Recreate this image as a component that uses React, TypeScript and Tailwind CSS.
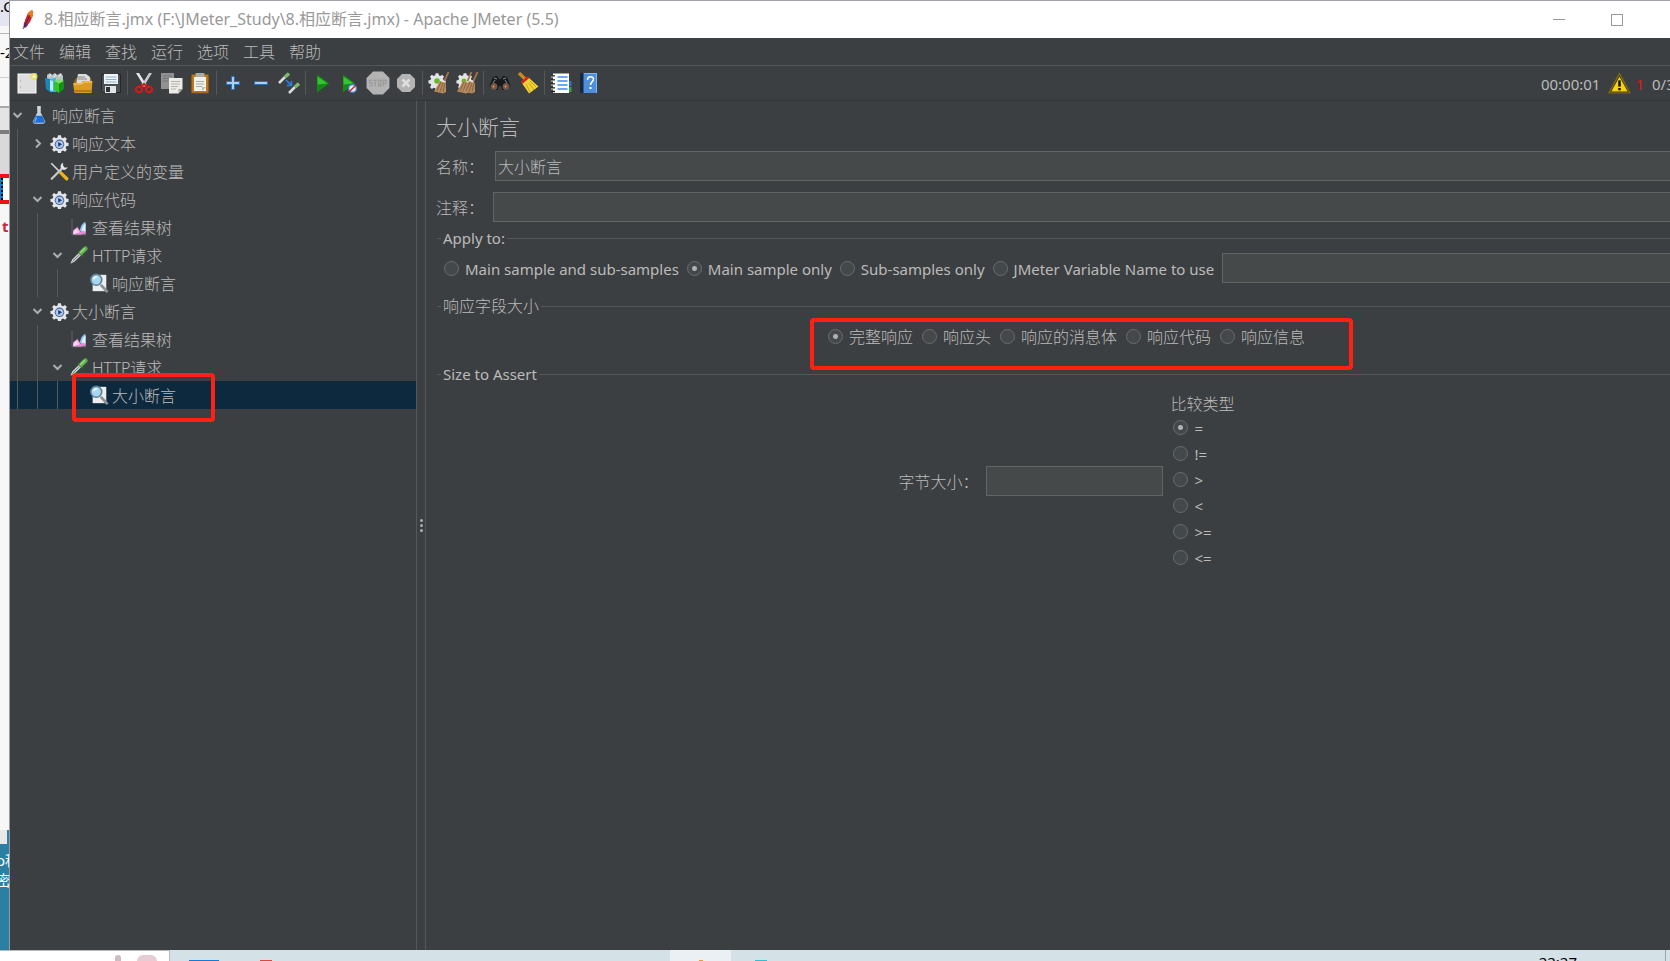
import React from "react";

type Kids = { children?: React.ReactNode };

function Svg({ s = 22, children }: Kids & { s?: number }) {
  return (
    <svg width={s} height={s} viewBox="0 0 22 22" fill="none" aria-hidden="true" className="shrink-0">
      {children}
    </svg>
  );
}

const GearPath = ({ fill = "#e3e5e8" }: { fill?: string }) => (
  <path
    fill={fill}
    d="M9.3 1.5h3.4l.5 2.6 1.9.8 2.2-1.5 2.3 2.3-1.5 2.2.8 1.9 2.6.5v3.4l-2.6.5-.8 1.9 1.5 2.2-2.3 2.3-2.2-1.5-1.9.8-.5 2.6H9.3l-.5-2.6-1.9-.8-2.2 1.5-2.3-2.3 1.5-2.2-.8-1.9L.5 13.700v-3.400l2.600-.5.8-1.900L2.400 5.700l2.300-2.300 2.200 1.500 1.900-.8z"
  />
);

const NewIcon = () => (
  <Svg>
    <rect x="2" y="2" width="18" height="19" fill="#dedede" stroke="#fafafa" />
    <circle cx="4.5" cy="9" r=".6" fill="#999" />
    <circle cx="4.5" cy="15" r=".6" fill="#999" />
    <circle cx="18" cy="4.5" r="3.5" fill="#e9dc5a" opacity=".85" />
    <circle cx="18" cy="4.5" r="1.5" fill="#fffbd0" />
  </Svg>
);
const TemplatesIcon = () => (
  <Svg>
    <path d="M3 3l3-2 2 2 3-2 2 2 4-2 2 3v5H3z" fill="#b9c3c6" />
    <path d="M5 5l2-3M10 5l2-3M15 5l2-3" stroke="#edf2f3" />
    <path d="M1 6l5 1v13l-4-3z" fill="#1b87b8" />
    <path d="M6 7l6-1v14l-6 0z" fill="#3cb7e0" />
    <path d="M6 8l3 1v10l-3-1z" fill="#bfeaf7" />
    <path d="M10 9l5-2 5 2-5 3z" fill="#7fe06a" />
    <path d="M10 9l5 3v9l-5-3z" fill="#35c52b" />
    <path d="M15 12l5-3v8l-5 4z" fill="#159216" />
  </Svg>
);
const OpenIcon = () => (
  <Svg>
    <path d="M2 10l2-4h15l1 4v7H2z" fill="#9a6a10" />
    <path d="M6 2h8l4 3v9H4z" fill="#dcdcdc" />
    <path d="M6 5h7M6 7h9" stroke="#888" />
    <path d="M1 11h8l2-2h9.500l-1 12H2.500z" fill="#d99b25" />
    <path d="M2 12h8l2-2h8" stroke="#f7d27b" />
    <path d="M3 19h16" stroke="#b77b12" strokeWidth="2" />
  </Svg>
);
const SaveIcon = () => (
  <Svg>
    <path d="M1.5 2.5h19v18h-17l-2-2z" fill="#4b4f55" stroke="#25282b" />
    <rect x="4" y="2" width="14" height="10" fill="#eef4f8" />
    <path d="M5.5 5h11M5.5 7.5h11M5.5 10h11" stroke="#8fb3cf" />
    <rect x="5" y="14" width="11" height="7" fill="#e4e4e4" />
    <rect x="6" y="15" width="4" height="5" fill="#303336" />
  </Svg>
);
const CutIcon = () => (
  <Svg>
    <path d="M3 1l3 0 7.500 12-2 2z" fill="#e5e7e8" />
    <path d="M19 1l-3 0-7.500 12 2 2z" fill="#c9cccd" />
    <ellipse cx="6" cy="17.5" rx="3.200" ry="2.800" stroke="#d81818" strokeWidth="2.200" />
    <ellipse cx="16" cy="17.5" rx="3.200" ry="2.800" stroke="#d81818" strokeWidth="2.200" />
    <path d="M8 15l3-3 3 3" stroke="#d81818" strokeWidth="2" />
  </Svg>
);
const CopyIcon = () => (
  <Svg>
    <path d="M0 1h13v16H0z" fill="#8f9192" />
    <path d="M2 4h9M2 6.500h9M2 9h5" stroke="#75787a" />
    <path d="M8 6h13.500v11l-4 4.500H8z" fill="#ecebe6" />
    <path d="M10 9.500h9M10 12h9M10 14.500h7M10 17h5" stroke="#b5b5b0" />
    <path d="M17.500 21.500v-4.500h4z" fill="#a9a9a3" />
  </Svg>
);
const PasteIcon = () => (
  <Svg>
    <rect x="2.500" y="2.500" width="17" height="18.500" rx="1" fill="#b9791b" stroke="#8b5a12" />
    <path d="M5 5h12v14H5z" fill="#f1f1ec" />
    <path d="M7 9.500h8M7 12h8M7 14.500h6" stroke="#aaa" />
    <rect x="6.500" y="1" width="9" height="4" rx="1" fill="#a9aca6" />
    <path d="M13 19v-4h4z" fill="#bbb" />
  </Svg>
);
const PlusIcon = () => (
  <Svg>
    <path d="M11 4v14M4 11h14" stroke="#2f6db5" strokeWidth="4" />
    <path d="M11 5v12M5 11h12" stroke="#a7d0f4" strokeWidth="2" />
  </Svg>
);
const MinusIcon = () => (
  <Svg>
    <path d="M4 11h14" stroke="#2f6db5" strokeWidth="4" />
    <path d="M5 11h12" stroke="#a7d0f4" strokeWidth="2" />
  </Svg>
);
const ToggleIcon = () => (
  <Svg>
    <path d="M1 11l6-6" stroke="#dcdcdc" strokeWidth="2.500" />
    <path d="M7 5l4-3.500" stroke="#7dbb6a" strokeWidth="3.500" />
    <path d="M11 21l6-6" stroke="#dcdcdc" strokeWidth="2.500" />
    <path d="M17 15l4-3.500" stroke="#7dbb6a" strokeWidth="3.500" />
    <path d="M8 8l5 5M13.500 9v4.500H9" stroke="#2f7de0" strokeWidth="1.700" />
  </Svg>
);
const PlayShape = () => (
  <>
    <path d="M6 2.500l12 9L6 20.500z" fill="#138a13" />
    <path d="M6.500 4.500l10 7-10 1z" fill="#35c435" />
  </>
);
const PlayIcon = () => (
  <Svg>
    <PlayShape />
  </Svg>
);
const PlayNoPauseIcon = () => (
  <Svg>
    <g transform="translate(-2)">
      <PlayShape />
    </g>
    <circle cx="13.5" cy="16.500" r="4" fill="#e8eef6" stroke="#3f78c4" strokeWidth="1.500" />
    <path d="M10.500 19.500l6-6" stroke="#d42020" strokeWidth="1.500" />
  </Svg>
);
const StopIcon = () => (
  <Svg s={24}>
    <path d="M6.500.5h9l6 6v9l-6 6h-9l-6-6v-9z" fill="#b3b3b3" />
    <path
      d="M5.600 8.500H3.300v2.500h2.300v2.700H3M6.700 8.500h3.600M8.500 8.500v5.500M11.500 8.500h2v5.200h-2zM15.800 14V8.500h2.400v3h-2.400"
      stroke="#9c9c9c"
      strokeWidth="1.200"
    />
  </Svg>
);
const ShutdownIcon = () => (
  <Svg>
    <path d="M7 2h8l5 5v8l-5 5H7l-5-5V7z" fill="#b3b3b3" />
    <path d="M7.500 7.500l7 7M14.500 7.500l-7 7" stroke="#dedede" strokeWidth="2.500" />
  </Svg>
);
const Brush = ({ x }: { x: number }) => (
  <g transform={`translate(${x})`}>
    <path d="M20.500 0l-4 9" stroke="#a5744a" strokeWidth="1.800" />
    <path d="M12 9l6 2 0 9-3 1.500-9-2z" fill="#b58a5e" />
    <path d="M13 10l-4 9M15 11l-3 9M17 11l-2 9" stroke="#8a6440" />
  </g>
);
const ClearIcon = () => (
  <Svg>
    <g transform="scale(.82)">
      <GearPath />
    </g>
    <circle cx="9" cy="9" r="2.800" fill="#6ab52d" />
    <Brush x={0} />
  </Svg>
);
const ClearAllIcon = () => (
  <Svg>
    <g transform="scale(.82)">
      <GearPath />
    </g>
    <circle cx="8" cy="9" r="2.500" fill="#6ab52d" />
    <Brush x={-5} />
    <Brush x={1} />
  </Svg>
);
const BinocularsIcon = () => (
  <Svg>
    <path d="M4 5l4-1 2 3h2l2-3 4 1 3.500 9-3 4h-5l-1.500-4h-2L8.500 18h-5l-3-4z" fill="#17191a" />
    <path d="M5 6l3 1M17 6l-3 1M6 8l-2 3M16 8l2 3" stroke="#8b8f90" />
    <circle cx="5" cy="14.500" r="3" fill="#8a4e2c" stroke="#666" />
    <circle cx="17" cy="14.500" r="3" fill="#8a4e2c" stroke="#666" />
    <circle cx="4.500" cy="14.500" r="1" fill="#e0a07c" />
    <circle cx="16.500" cy="14.500" r="1" fill="#e0a07c" />
  </Svg>
);
const BroomIcon = () => (
  <Svg>
    <path d="M2 1l7 7" stroke="#c98a1d" strokeWidth="3.400" />
    <path d="M4.500 10.500L11 5l10.500 9.500L12 21.500z" fill="#f1d233" />
    <path d="M9 12l4 8M12 11l5 7M13 9l6 6" stroke="#c9a51c" />
    <path d="M4.500 11l7-6" stroke="#d02222" strokeWidth="2.400" />
  </Svg>
);
const ListIcon = () => (
  <Svg>
    <rect x="18" y="9" width="3.500" height="5" fill="#2a6fd0" />
    <rect x="18" y="15" width="3.500" height="5" fill="#31a531" />
    <rect x="3" y="1.500" width="16" height="19.500" fill="#fff" />
    <path d="M7.500 5h10M7.500 9h10M7.500 13h10M7.500 17h10" stroke="#3d8bea" strokeWidth="1.400" />
    <path d="M1 4h4M1 8h4M1 12h4M1 16h4M1 19.500h4" stroke="#222" strokeWidth="1.500" />
    <path d="M1 5h4M1 9h4M1 13h4M1 17h4" stroke="#ddd" />
  </Svg>
);
const HelpIcon = () => (
  <Svg>
    <path d="M2 1h5v20H2z" fill="#16283d" />
    <path d="M5.500 1H19v20H5.500z" fill="#4d8fdd" />
    <path d="M6 1.500h12.500v19" stroke="#85b8f0" />
    <path d="M9.500 8c0-4.500 6-4 6-.8 0 2.400-3 2.500-3 5.800" stroke="#fff" strokeWidth="1.500" />
    <rect x="11.500" y="15" width="2" height="2" fill="#fff" />
  </Svg>
);
const WarnIcon = () => (
  <Svg s={23}>
    <path d="M11 1.500L21 20H1z" fill="#3a3410" stroke="#7d6a10" strokeWidth="1.300" strokeLinejoin="round" />
    <path d="M11 4.500L18.800 18.700H3.200z" fill="#f8d20c" />
    <path d="M11 8v6" stroke="#111" strokeWidth="2.400" />
    <rect x="9.800" y="15.300" width="2.400" height="2.200" fill="#111" />
  </Svg>
);

const FlaskIcon = () => (
  <Svg s={18}>
    <path d="M8.500 1h5M9.500 1v7L4 19q0 2 2 2h10q2 0 2-2L12.500 8V1z" fill="#c6d2da" stroke="#dfe6ea" />
    <path d="M7 12h8l3 7q0 1.500-1.500 1.500h-11Q4 20.500 4 19z" fill="#1c6fd4" />
    <path d="M8 14l-2 5" stroke="#7db9f5" strokeWidth="1.500" />
  </Svg>
);
const ThreadGroupIcon = () => (
  <Svg s={19}>
    <GearPath />
    <circle cx="11" cy="12" r="5.500" fill="#4a6a9c" />
    <circle cx="11" cy="12" r="4.300" fill="#b3caea" />
    <path d="M9.500 9.200l4.500 2.800-4.500 2.800z" fill="#1d3f77" />
  </Svg>
);
const ToolsIcon = () => (
  <Svg s={20}>
    <path d="M2.500 2.500l9 9" stroke="#d6d8d9" strokeWidth="1.800" />
    <path d="M13 13l6.500 6.500" stroke="#f0b418" strokeWidth="3.600" strokeLinecap="round" />
    <path d="M3 19.500L15.500 7" stroke="#c7cacc" strokeWidth="2.400" strokeLinecap="round" />
    <path d="M15.500 2a4 4 0 1 0 5 5l-3 .5-2-2z" fill="#e2e4e5" />
  </Svg>
);
const ChartIcon = () => (
  <Svg s={18}>
    <path d="M2.500 1v19.500H20" stroke="#696d70" />
    <path d="M4 20v-5l5-4 6 9z" fill="#f3a6dc" />
    <path d="M4 20v-3l4-4 3 4 3 3z" fill="#fbd5f1" />
    <path d="M12 15q2-9 7-10v14h-4z" fill="#8fc2f2" />
    <path d="M14 15q2-7 5-8v10z" fill="#dff0ff" />
    <path d="M4 20h15v-4l-6 1z" fill="#e986cf" />
  </Svg>
);
const PipetteIcon = () => (
  <Svg s={20}>
    <path d="M1.500 20.500L3.500 16 11 8.500l2.500 2.500L6 18.500z" fill="#cfd3d5" />
    <path d="M4 18l7.500-7.500" stroke="#6c7174" />
    <path d="M10 7l5.500 5.500" stroke="#2f6a2a" strokeWidth="2" />
    <path d="M13.500 8.500L18 4" stroke="#5fae50" strokeWidth="5" strokeLinecap="round" />
    <path d="M13 8l4-4" stroke="#a7dd97" strokeWidth="1.500" strokeLinecap="round" />
  </Svg>
);
const AssertionIcon = () => (
  <Svg s={20}>
    <path d="M4 2h15v18H4z" fill="#eeeeee" />
    <path d="M13 13l7.500 8" stroke="#8b8f92" strokeWidth="3" />
    <circle cx="8" cy="7.500" r="6" fill="#a7d8f0" stroke="#5b7e9c" strokeWidth="1.700" />
    <path d="M5 7q1-3 4-3" stroke="#eefaff" strokeWidth="1.800" />
  </Svg>
);
const FeatherIcon = () => (
  <svg width="12" height="20" viewBox="0 0 12 20" aria-hidden="true" className="shrink-0">
    <path d="M10 0q2 2 1 5l-3 7-4 5-2-1 1-6 3-7z" fill="#c8242e" />
    <path d="M10 0q2 2 1 5l-1 3-4-3 1-3z" fill="#ef7d1c" />
    <path d="M2 12l4 3-3 3-1.500-1z" fill="#6b2a7d" />
    <path d="M8 5L1 19" stroke="#4a1b3a" strokeWidth=".8" />
  </svg>
);

const toolGroups: [string, () => React.ReactElement][][] = [
  [["新建", NewIcon], ["模板", TemplatesIcon], ["打开", OpenIcon], ["保存", SaveIcon]],
  [["剪切", CutIcon], ["复制", CopyIcon], ["粘贴", PasteIcon]],
  [["展开", PlusIcon], ["折叠", MinusIcon], ["切换", ToggleIcon]],
  [["启动", PlayIcon], ["不停顿启动", PlayNoPauseIcon], ["停止", StopIcon], ["关闭", ShutdownIcon]],
  [["清除", ClearIcon], ["清除全部", ClearAllIcon]],
  [["搜索", BinocularsIcon], ["重置搜索", BroomIcon]],
  [["函数助手", ListIcon], ["帮助", HelpIcon]],
];

type Row = { depth: number; label: string; icon: () => React.ReactElement; open?: boolean; selected?: boolean };
const rows: Row[] = [
  { depth: 0, label: "响应断言", icon: FlaskIcon, open: true },
  { depth: 1, label: "响应文本", icon: ThreadGroupIcon, open: false },
  { depth: 1, label: "用户定义的变量", icon: ToolsIcon },
  { depth: 1, label: "响应代码", icon: ThreadGroupIcon, open: true },
  { depth: 2, label: "查看结果树", icon: ChartIcon },
  { depth: 2, label: "HTTP请求", icon: PipetteIcon, open: true },
  { depth: 3, label: "响应断言", icon: AssertionIcon },
  { depth: 1, label: "大小断言", icon: ThreadGroupIcon, open: true },
  { depth: 2, label: "查看结果树", icon: ChartIcon },
  { depth: 2, label: "HTTP请求", icon: PipetteIcon, open: true },
  { depth: 3, label: "大小断言", icon: AssertionIcon, selected: true },
];

function TreeRow({ depth, label, icon: Icon, open, selected }: Row) {
  return (
    <li
      role="treeitem"
      aria-level={depth + 1}
      aria-expanded={open}
      aria-selected={!!selected}
      className={`relative flex h-7 items-center ${selected ? "bg-[#0d293e]" : ""}`}
    >
      {Array.from({ length: depth }, (_, i) => (
        <span key={i} className="flex h-full w-5 shrink-0 pl-[7px]">
          <span className="w-px bg-[#57595b]" />
        </span>
      ))}
      <span className="w-[19px] shrink-0 pl-0.5">
        {open !== undefined ? (
          <svg width="11" height="11" viewBox="0 0 11 11" fill="none" stroke="#adadad" strokeWidth="2" aria-hidden="true">
            <path d={open ? "M1.500 3l4 4 4-4" : "M4 1.500l4 4-4 4"} />
          </svg>
        ) : null}
      </span>
      <span className="flex w-5 shrink-0 items-center justify-center">
        <Icon />
      </span>
      <span className="ml-[3px] pt-0.5">{label}</span>
      {selected ? (
        <span className="absolute -top-2 left-[62px] h-[49px] w-[143px] rounded-sm border-4 border-[#ff2114]" />
      ) : null}
    </li>
  );
}

function Radio({ name, label, on }: { name: string; label: string; on?: boolean }) {
  return (
    <label className="flex items-center gap-1.5 whitespace-nowrap">
      <input
        type="radio"
        name={name}
        defaultChecked={on}
        className="size-[15px] shrink-0 appearance-none rounded-full border border-[#6b6b6b] bg-[#43494a] checked:bg-[radial-gradient(circle,#b0b0b0_2px,#43494a_3px)]"
      />
      <span className="pt-0.5">{label}</span>
    </label>
  );
}

const field = "h-[30px] min-w-0 border border-[#646464] bg-[#45494a] px-0.5 text-[#bbbbbb] outline-none";
const group = "mr-1 ml-[11px] border-t border-[#555759]";
const legend = "ml-1 h-5 px-0.5 leading-5";
const cjkLabel = "pt-0.5 text-[16px] font-light";

export default function App() {
  return (
    <div className="flex h-screen flex-col overflow-hidden bg-[#d4e2e8] font-['Noto_Sans','Noto_Sans_CJK_SC',sans-serif] text-[15px] leading-5 text-[#bbbbbb]">
      <div className="flex min-h-0 flex-1">
        <aside className="flex w-2.5 shrink-0 flex-col overflow-hidden border-r border-[#9a9a9a] bg-[#f7f7f8] text-black">
          <div className="h-[26px] shrink-0 bg-[#e3e5f2] leading-3">.C</div>
          <div className="h-[8px] shrink-0 border-b border-[#b5b5b5] bg-[#f7f7f8]" />
          <div className="h-[44px] shrink-0 border-b border-[#d0d0d0] pt-2 whitespace-nowrap">-2</div>
          <div className="h-[30px] shrink-0 border-b-2 border-[#aaaaaa]" />
          <div className="h-[22px] shrink-0 bg-[#e4e4e4]" />
          <div className="h-[44px] shrink-0 border-t-4 border-[#7c7c7c] bg-[#d9d9d9]" />
          <div className="flex h-[30px] shrink-0 border-y-4 border-[#f01313] bg-white">
            <span className="w-[3px] border-r-2 border-dotted border-black bg-[#1677d2]" />
          </div>
          <div className="h-[12px] shrink-0" />
          <div className="shrink-0 pl-0.5 font-bold text-[#c9283b]">t</div>
          <div className="flex-1" />
          <div className="h-[120px] shrink-0 bg-[#2a7fa3] text-white">
            <div className="h-3.5 w-[7px] bg-[#e8e8e8]" />
            <div className="mt-1.5 -ml-1 whitespace-nowrap">o程</div>
            <div className="-ml-1 whitespace-nowrap">密</div>
          </div>
        </aside>

        <div className="flex min-w-0 flex-1 flex-col border-t border-[#a3a3ab] bg-[#3c3f41]">
          <header className="flex h-[37px] shrink-0 items-center bg-white pl-3 text-[#999999]">
            <FeatherIcon />
            <h1 className="ml-2.5 pb-0.5 text-[16px] whitespace-nowrap">8.相应断言.jmx (F:\JMeter_Study\8.相应断言.jmx) - Apache JMeter (5.5)</h1>
            <button aria-label="最小化" className="ml-auto flex h-full w-[58px] items-center justify-center">
              <span className="h-px w-3 bg-[#999999]" />
            </button>
            <button aria-label="最大化" className="mr-6 flex h-full w-[58px] items-center justify-center">
              <span className="size-3 border border-[#999999]" />
            </button>
          </header>

          <nav className="flex h-7 shrink-0 items-center gap-3.5 border-b border-[#555759] pl-[3px] text-[16px] font-light">
            {["文件", "编辑", "查找", "运行", "选项", "工具", "帮助"].map((m) => (
              <button key={m}>{m}</button>
            ))}
          </nav>

          <div className="flex h-[35px] shrink-0 items-center border-b border-[#323436] pl-[3px]">
            {toolGroups.map((g, i) => (
              <div key={i} className="flex items-center">
                {i > 0 ? <span className="mx-0.5 h-6 w-px bg-[#555759]" /> : null}
                {g.map(([name, Icon]) => (
                  <button key={name} aria-label={name} className="flex h-7 w-7 items-center justify-center">
                    <Icon />
                  </button>
                ))}
              </div>
            ))}
            <div className="ml-auto flex items-center">
              <span className="pt-0.5">00:00:01</span>
              <span className="mr-1 ml-2">
                <WarnIcon />
              </span>
              <span className="pt-0.5 text-[#f01010]">1</span>
              <span className="ml-2 w-[18px] overflow-hidden pt-0.5 whitespace-nowrap">0/3</span>
            </div>
          </div>

          <div className="flex min-h-0 flex-1">
            <ul role="tree" className="w-[407px] shrink-0 border-r border-[#595757] text-[16px] font-light">
              {rows.map((r, i) => (
                <TreeRow key={i} {...r} />
              ))}
            </ul>
            <div className="flex w-[9px] shrink-0 flex-col items-center justify-center gap-0.5 border-r border-[#555759]">
              <span className="size-[3px] rounded-full bg-[#adadad]" />
              <span className="size-[3px] rounded-full bg-[#adadad]" />
              <span className="size-[3px] rounded-full bg-[#adadad]" />
            </div>

            <main className="-mr-[30px] min-w-0 flex-1">
              <h2 className="h-[50px] pt-3.5 pl-2.5 text-[21px] leading-6 font-light">大小断言</h2>
              <div className="flex items-center pl-2.5">
                <label htmlFor="name" className={`${cjkLabel} w-[59px]`}>名称：</label>
                <input id="name" defaultValue="大小断言" className={`${field} flex-1 text-[16px] font-light`} />
              </div>
              <div className="mt-[11px] flex items-center pl-2.5">
                <label htmlFor="comment" className={`${cjkLabel} w-[57px]`}>注释：</label>
                <input id="comment" className={`${field} flex-1`} />
              </div>

              <fieldset className={`${group} mt-1.5`}>
                <legend className={legend}>Apply to:</legend>
                <div className="flex items-center gap-2 pt-[5px] pb-[13px] pl-[7px]">
                  <Radio name="apply" label="Main sample and sub-samples" />
                  <Radio name="apply" label="Main sample only" on />
                  <Radio name="apply" label="Sub-samples only" />
                  <Radio name="apply" label="JMeter Variable Name to use" />
                  <input aria-label="JMeter Variable Name to use" className={`${field} flex-1`} />
                </div>
              </fieldset>

              <fieldset className={`${group} text-[16px] font-light`}>
                <legend className={legend}>响应字段大小</legend>
                <div className="flex justify-center pt-2.5 pb-[18px]">
                  <div className="relative flex h-5 items-center gap-[9px]">
                    <Radio name="part" label="完整响应" on />
                    <Radio name="part" label="响应头" />
                    <Radio name="part" label="响应的消息体" />
                    <Radio name="part" label="响应代码" />
                    <Radio name="part" label="响应信息" />
                    <span className="pointer-events-none absolute -top-2 -right-12 -bottom-6 -left-[18px] rounded-sm border-4 border-[#ff2114]" />
                  </div>
                </div>
              </fieldset>

              <fieldset className={group}>
                <legend className={legend}>Size to Assert</legend>
                <div className="flex items-center justify-center pt-2">
                  <label htmlFor="bytes" className={`${cjkLabel} w-[88px]`}>字节大小：</label>
                  <input id="bytes" className={`${field} w-[177px]`} />
                  <div role="radiogroup" aria-labelledby="cmp" className="ml-[7px]">
                    <div id="cmp" className={`${cjkLabel} h-[22px]`}>比较类型</div>
                    {["=", "!=", ">", "<", ">=", "<="].map((op, i) => (
                      <div key={op} className="flex h-[26px] items-center pl-[3px]">
                        <Radio name="cmp" label={op} on={i === 0} />
                      </div>
                    ))}
                  </div>
                </div>
              </fieldset>
            </main>
          </div>
        </div>
      </div>

      <footer className="flex h-[11px] shrink-0 items-start overflow-hidden bg-[#d4e2e8] text-black">
        <div className="flex h-full w-[170px] items-end justify-end gap-4 border-t border-r border-[#b9b9b9] bg-white pr-3">
          <span className="h-1.5 w-1.5 rounded-t-full bg-[#cdbcc4]" />
          <span className="h-1.5 w-5 rounded-t-full bg-[#e6cdd3]" />
        </div>
        <span className="mt-2.5 ml-[19px] h-1 w-[30px] bg-[#0f7be0]" />
        <span className="mt-2.5 ml-[41px] h-1 w-3 bg-[#e2453a]" />
        <span className="ml-[398px] flex h-full w-[61px] items-end justify-center bg-[#eaf0f3]">
          <span className="h-px w-1 bg-[#f39a1f]" />
        </span>
        <span className="mt-2.5 ml-6 h-1 w-3 bg-[#28c3d8]" />
        <span className="mt-0.5 mr-[88px] ml-auto">22:27</span>
        <span className="mr-1 h-full w-px bg-[#9aa7ad]" />
      </footer>
    </div>
  );
}
